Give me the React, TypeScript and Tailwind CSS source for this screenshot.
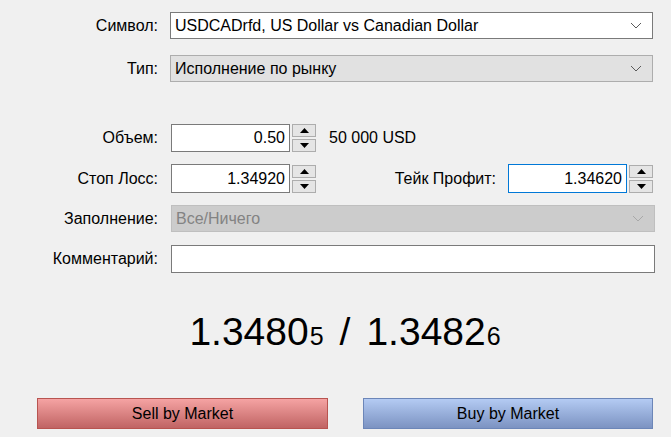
import React from 'react'

const font = { fontFamily: '"Liberation Sans", Arial, sans-serif' }

const Chevron: React.FC<{ muted?: boolean }> = ({ muted }) => (
  <svg width="12" height="7" viewBox="0 0 12 7" className="shrink-0">
    <polyline
      points="1,1 6,6 11,1"
      fill="none"
      stroke={muted ? '#a8a8a8' : '#5a5a5a'}
      strokeWidth="1"
    />
  </svg>
)

const Spinner: React.FC = () => (
  <div className="flex flex-col gap-[2px] ml-[2px] w-[24px]">
    <div className="h-[13px] border border-[#adadad] bg-[#e5e5e5] flex items-center justify-center">
      <svg width="9" height="5" viewBox="0 0 9 5">
        <polygon points="0,5 9,5 4.5,0" fill="#000" />
      </svg>
    </div>
    <div className="h-[13px] border border-[#adadad] bg-[#e5e5e5] flex items-center justify-center">
      <svg width="9" height="5" viewBox="0 0 9 5">
        <polygon points="0,0 9,0 4.5,5" fill="#000" />
      </svg>
    </div>
  </div>
)

const Label: React.FC<{ children: React.ReactNode }> = ({ children }) => (
  <div className="w-[158px] shrink-0 text-right text-[16px] text-black">
    {children}
  </div>
)

export default function App() {
  return (
    <div
      className="w-[671px] h-[437px] bg-[#f0f0f0] text-black overflow-hidden flex flex-col"
      style={font}
    >
      {/* Symbol */}
      <div className="flex items-center mt-[12px] h-[27px]">
        <Label>Символ:</Label>
        <div className="ml-[12px] w-[483px] h-[27px] bg-white border border-[#7a7a7a] flex items-center justify-between pl-[4px] pr-[10px] text-[16px]">
          <span>USDCADrfd, US Dollar vs Canadian Dollar</span>
          <Chevron />
        </div>
      </div>

      {/* Type */}
      <div className="flex items-center mt-[16px] h-[27px]">
        <Label>Тип:</Label>
        <div className="ml-[12px] w-[483px] h-[27px] bg-[#e1e1e1] border border-[#adadad] flex items-center justify-between pl-[4px] pr-[10px] text-[16px]">
          <span>Исполнение по рынку</span>
          <Chevron />
        </div>
      </div>

      {/* Volume */}
      <div className="flex items-center mt-[42px] h-[28px]">
        <Label>Объем:</Label>
        <div className="ml-[13px] w-[119px] h-[28px] bg-white border border-[#7a7a7a] flex items-center justify-end pr-[4px] text-[16px]">
          0.50
        </div>
        <Spinner />
        <span className="ml-[13px] text-[16px]">50 000 USD</span>
      </div>

      {/* Stop loss / Take profit */}
      <div className="flex items-center mt-[12px] h-[29px]">
        <Label>Стоп Лосс:</Label>
        <div className="ml-[13px] w-[119px] h-[29px] bg-white border border-[#7a7a7a] flex items-center justify-end pr-[4px] text-[16px]">
          1.34920
        </div>
        <Spinner />
        <span className="ml-auto mr-[12px] text-[16px]">Тейк Профит:</span>
        <div className="w-[119px] h-[29px] bg-white border border-[#0078d7] flex items-center justify-end pr-[4px] text-[16px]">
          1.34620
        </div>
        <div className="mr-[18px]">
          <Spinner />
        </div>
      </div>

      {/* Filling */}
      <div className="flex items-center mt-[12px] h-[27px]">
        <Label>Заполнение:</Label>
        <div className="ml-[13px] w-[484px] h-[27px] bg-[#cccccc] border border-[#bfbfbf] flex items-center justify-between pl-[4px] pr-[10px] text-[16px] text-[#838383]">
          <span>Все/Ничего</span>
          <Chevron muted />
        </div>
      </div>

      {/* Comment */}
      <div className="flex items-center mt-[13px] h-[28px]">
        <Label>Комментарий:</Label>
        <div className="ml-[13px] w-[484px] h-[28px] bg-white border border-[#7a7a7a]" />
      </div>

      {/* Prices */}
      <div className="mt-[37px] pl-[37px] pr-[18px] flex justify-center">
        <div className="flex items-baseline leading-[44px] text-black">
          <span className="text-[39px]">1.3480</span>
          <span className="text-[25px] ml-[1px]">5</span>
          <span className="text-[39px] mx-[16px]">/</span>
          <span className="text-[39px]">1.3482</span>
          <span className="text-[25px] ml-[1px]">6</span>
        </div>
      </div>

      {/* Buttons */}
      <div className="mt-auto mb-[8px] pl-[37px] pr-[18px] flex gap-[35px]">
        <button className="w-[291px] h-[31px] border border-[#b85450] bg-gradient-to-b from-[#f5a3a3] to-[#c06464] text-[16px] text-black">
          Sell by Market
        </button>
        <button className="w-[290px] h-[31px] border border-[#6c86b8] bg-gradient-to-b from-[#b4cbf3] to-[#7c93c2] text-[16px] text-black">
          Buy by Market
        </button>
      </div>
    </div>
  )
}
